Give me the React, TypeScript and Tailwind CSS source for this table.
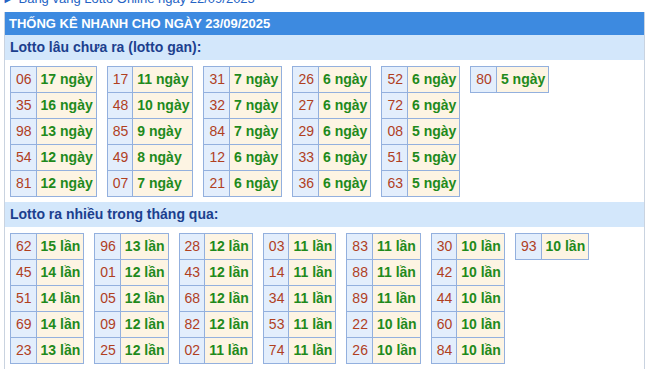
const gan: [string, string][][] = [
  [["06", "17"], ["35", "16"], ["98", "13"], ["54", "12"], ["81", "12"]],
  [["17", "11"], ["48", "10"], ["85", "9"], ["49", "8"], ["07", "7"]],
  [["31", "7"], ["32", "7"], ["84", "7"], ["12", "6"], ["21", "6"]],
  [["26", "6"], ["27", "6"], ["29", "6"], ["33", "6"], ["36", "6"]],
  [["52", "6"], ["72", "6"], ["08", "5"], ["51", "5"], ["63", "5"]],
  [["80", "5"]],
];

const nhieu: [string, string][][] = [
  [["62", "15"], ["45", "14"], ["51", "14"], ["69", "14"], ["23", "13"]],
  [["96", "13"], ["01", "12"], ["05", "12"], ["09", "12"], ["25", "12"]],
  [["28", "12"], ["43", "12"], ["68", "12"], ["82", "12"], ["02", "11"]],
  [["03", "11"], ["14", "11"], ["34", "11"], ["53", "11"], ["74", "11"]],
  [["83", "11"], ["88", "11"], ["89", "11"], ["22", "10"], ["26", "10"]],
  [["30", "10"], ["42", "10"], ["44", "10"], ["60", "10"], ["84", "10"]],
  [["93", "10"]],
];

function LottoTable({ rows, unit }: { rows: [string, string][]; unit: string }) {
  return (
    <table className="border-collapse border border-[#93b0de] text-[14px] leading-[17px]">
      <tbody>
        {rows.map(([num, count]) => (
          <tr key={num}>
            <td className="border border-[#93b0de] bg-[#e3eefc] py-[4px] pl-[5px] pr-[4px] text-[#b0401f]">{num}</td>
            <td className="border border-[#93b0de] bg-[#fdf4e3] py-[4px] pl-[4px] pr-[3px] font-bold text-[#1f8a1c]">
              {count} {unit}
            </td>
          </tr>
        ))}
      </tbody>
    </table>
  );
}

function Section({ title, tables, unit }: { title: string; tables: [string, string][][]; unit: string }) {
  return (
    <>
      <div className="flex h-[25px] items-center bg-[#d3e7fb] px-[5px] text-[14px] font-bold text-[#1c3f8e]">{title}</div>
      <div className="flex flex-wrap items-start gap-x-[10px] px-[5px] pb-[5px] pt-[6px]">
        {tables.map((t, i) => (
          <LottoTable key={i} rows={t} unit={unit} />
        ))}
      </div>
    </>
  );
}

export default function App() {
  return (
    <div className="h-[371px] w-[651px] overflow-hidden bg-white font-['Liberation_Sans',Arial,sans-serif]">
      <div className="-mt-[9px] pl-[2px] text-[13px] leading-[15px] text-[#2563c4]">► Bảng vàng Lotto Online ngày 22/09/2025</div>
      <div className="ml-[4px] mt-[6px] w-[641px] border-x border-[#c9d3e0]">
        <div className="flex h-[23px] items-center bg-[#3d8ae0] px-[4px] text-[13px] font-bold text-white">
          THỐNG KÊ NHANH CHO NGÀY 23/09/2025
        </div>
        <Section title="Lotto lâu chưa ra (lotto gan):" tables={gan} unit="ngày" />
        <Section title="Lotto ra nhiều trong tháng qua:" tables={nhieu} unit="lần" />
      </div>
    </div>
  );
}
